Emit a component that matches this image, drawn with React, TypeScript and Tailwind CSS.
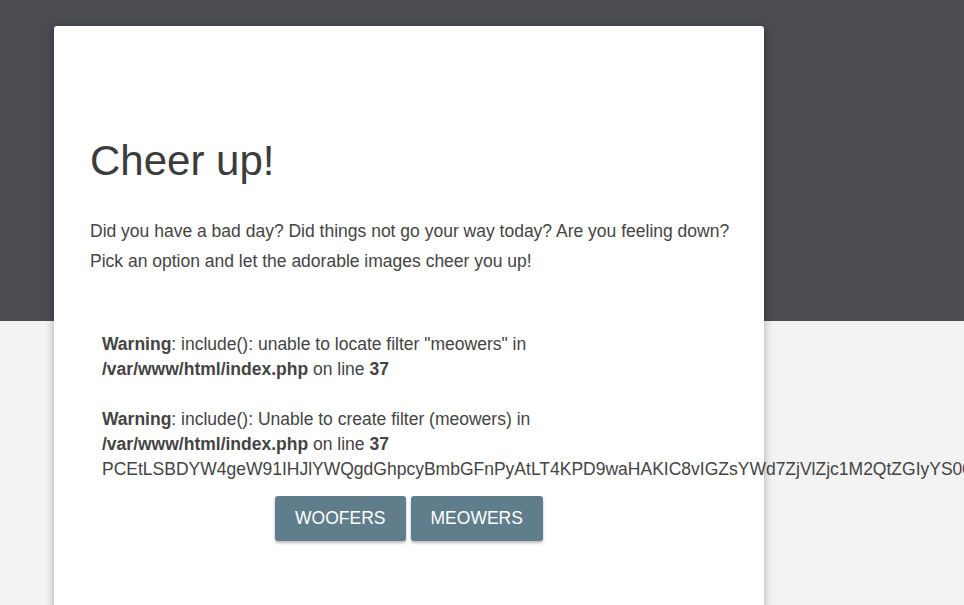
const flagText =
  "PCEtLSBDYW4geW91IHJlYWQgdGhpcyBmbGFnPyAtLT4KPD9waHAKIC8vIGZsYWd7ZjVlZjc1M2QtZGIyYS00ZjE2LWE5NzctM2E4ZjQ2YjFhYjQ0fQo/Pgo=";

function PhpWarning({ message }: { message: string }) {
  return (
    <>
      <br />
      <b>Warning</b>: {message} in <b>/var/www/html/index.php</b> on line <b>37</b>
      <br />
    </>
  );
}

export default function App() {
  return (
    <div className="h-screen w-full overflow-hidden bg-[linear-gradient(to_bottom,#4a4c52_321px,#f3f3f3_321px)] font-['Liberation_Sans',Arial,sans-serif]">
      <div className="ml-[54px] mt-[26px] h-[640px] w-[710px] rounded-t-[3px] bg-white px-9 pt-[110px] shadow-[0_2px_10px_rgba(0,0,0,0.3)]">
        <h1 className="mb-[30px] text-[42px] leading-[50px] text-[#3c3c3c]">Cheer up!</h1>
        <p className="whitespace-nowrap text-[17.5px] leading-[30px] text-[#444]">
          Did you have a bad day? Did things not go your way today? Are you feeling down?
          <br />
          Pick an option and let the adorable images cheer you up!
        </p>
        <div className="mt-[56px] px-3 text-[17.5px] leading-[25px] text-[#444]">
          <div className="w-[480px] whitespace-nowrap">
            <div className="-mt-[25px] whitespace-normal">
              <PhpWarning message={'include(): unable to locate filter "meowers"'} />
              <PhpWarning message="include(): Unable to create filter (meowers)" />
            </div>
            <div>{flagText}</div>
          </div>
        </div>
        <div className="mt-[14px] flex justify-center gap-[5px]">
          <button className="h-[45px] rounded-[3px] bg-[#607d8b] px-5 text-[17.5px] uppercase text-white shadow-[0_2px_3px_rgba(0,0,0,0.28)]">
            Woofers
          </button>
          <button className="h-[45px] rounded-[3px] bg-[#607d8b] px-5 text-[17.5px] uppercase text-white shadow-[0_2px_3px_rgba(0,0,0,0.28)]">
            Meowers
          </button>
        </div>
      </div>
    </div>
  );
}
